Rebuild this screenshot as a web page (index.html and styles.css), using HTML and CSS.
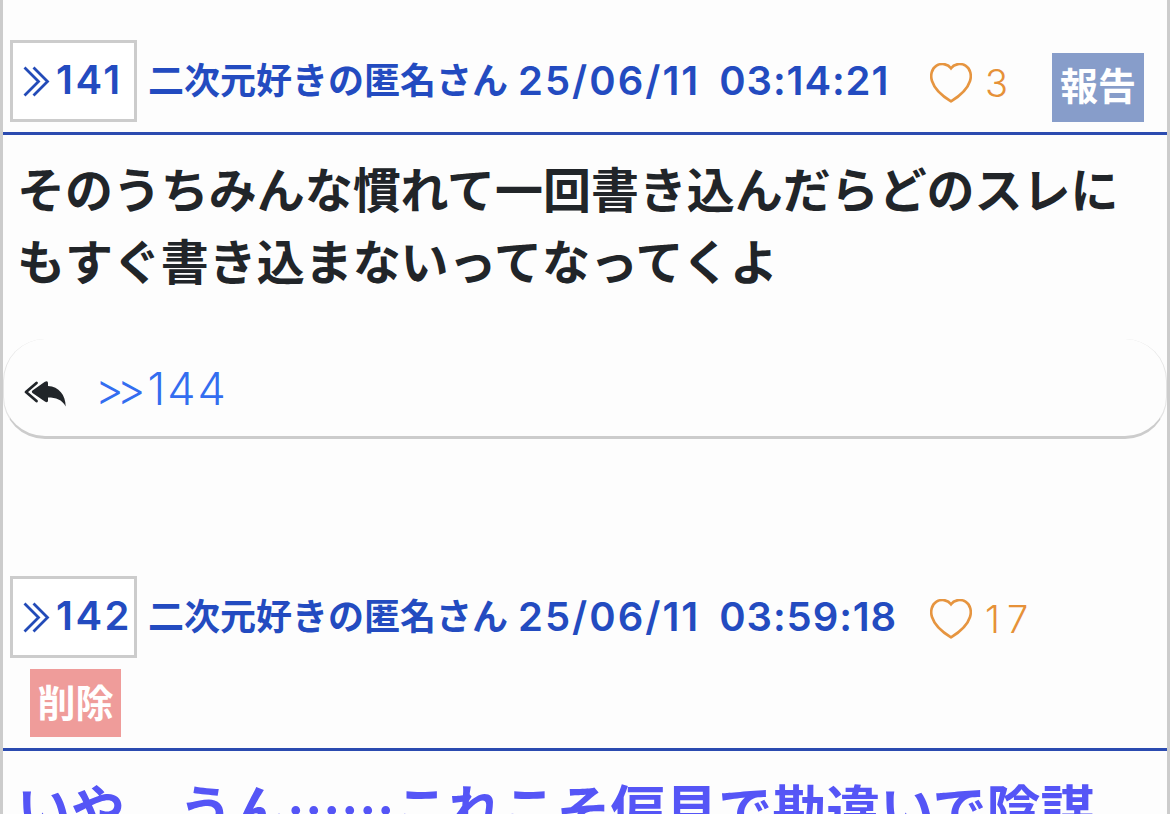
FILE: index.html
```html
<!DOCTYPE html>
<html lang="ja">
<head>
    <meta charset="UTF-8">
    <meta name="viewport" content="width=device-width, initial-scale=1.0">
    <title>スレッド</title>
    <link rel="stylesheet" href="styles.css">
</head>
<body>
    <main class="thread">
        <article class="post">
            <header class="post-header">
                <a class="res-number">
                    <svg class="icon-angles" viewBox="0 0 27 31" width="27" height="31"><path d="M1.5 1.5 15.5 15.5 1.5 29.5M10.5 1.5 24.5 15.5 10.5 29.5"/></svg>
                    <span class="num">141</span>
                </a>
                <span class="name">二次元好きの匿名さん</span>
                <time class="date">25/06/11 <span class="clock">03:14:21</span></time>
                <span class="like">
                    <svg class="icon-heart" viewBox="0 0 42 40" width="42" height="40"><path d="M21 5.2C17.5.2 10.5.2 6.500 2.600 1.500 5.600.200 12.500 2 18 4.500 26 13 33.500 21 38.300 29 33.500 37.500 26 40 18 41.800 12.500 40.500 5.600 35.500 2.600 31.500.2 24.500.2 21 5.200Z"/></svg>
                    <span class="like-count">3</span>
                </span>
                <button class="btn report">報告</button>
            </header>
            <p class="post-body">そのうちみんな慣れて一回書き込んだらどのスレに<br>もすぐ書き込まないってなってくよ</p>
            <div class="replies">
                <svg class="icon-reply" viewBox="0 0 42 26" width="42" height="26"><path class="reply-line" d="M12.500 2 2 11 12.500 20"/><path d="M8.500 9.500 20.500.900Q24 -.8 24 2V5C35 5.500 41.500 14 41.700 25.500 38 18.500 32 16.500 24 16.500V19.500Q24 22.300 20.500 20.300L8.500 12Q7.200 10.700 8.500 9.500Z"/></svg>
                <a class="reply-link"><span class="arrows">&gt;&gt;</span>144</a>
            </div>
        </article>

        <article class="post">
            <header class="post-header">
                <a class="res-number">
                    <svg class="icon-angles" viewBox="0 0 27 31" width="27" height="31"><path d="M1.5 1.5 15.5 15.5 1.5 29.5M10.5 1.5 24.5 15.5 10.5 29.5"/></svg>
                    <span class="num">142</span>
                </a>
                <span class="name">二次元好きの匿名さん</span>
                <time class="date">25/06/11 <span class="clock">03:59:18</span></time>
                <span class="like">
                    <svg class="icon-heart" viewBox="0 0 42 40" width="42" height="40"><path d="M21 5.2C17.5.2 10.5.2 6.500 2.600 1.500 5.600.200 12.500 2 18 4.500 26 13 33.500 21 38.300 29 33.500 37.500 26 40 18 41.800 12.500 40.500 5.600 35.500 2.600 31.500.2 24.500.2 21 5.200Z"/></svg>
                    <span class="like-count">17</span>
                </span>
                <button class="btn delete">削除</button>
            </header>
            <p class="post-body popular">いや　うん……これこそ偏見で勘違いで陰謀</p>
        </article>
    </main>
</body>
</html>
```

FILE: styles.css
```css
* {
    margin: 0;
    padding: 0;
    box-sizing: border-box;
}

body {
    height: 814px;
    overflow: hidden;
    background: #fdfdfd;
    color: #212529;
    font-family: "Noto Sans CJK JP", sans-serif;
}

.thread {
    height: 814px;
    padding-top: 40px;
    border-left: 3px solid #ccc;
    border-right: 3px solid #ccc;
    overflow: hidden;
}

.post {
    height: 536px;
}

.post-header {
    display: flex;
    flex-wrap: wrap;
    align-items: flex-start;
    padding: 0 7px 10px;
    border-bottom: 3px solid #2b4bb0;
    color: #234bc0;
}

.res-number {
    display: flex;
    align-items: center;
    width: 127px;
    height: 82px;
    padding-left: 10px;
    border: 3px solid #ccc;
    background: #fff;
}

.icon-angles {
    fill: none;
    stroke: #234bb8;
    stroke-width: 2.8;
}

.num,
.date {
    font-family: Inter, sans-serif;
    font-size: 40px;
    font-weight: 600;
    font-feature-settings: "calt" 0;
    line-height: 82px;
    white-space: nowrap;
}

.num {
    margin: -2px 0 0 6px;
    letter-spacing: 2.5px;
}

.name {
    margin-left: 11px;
    font-size: 36px;
    font-weight: 700;
    line-height: 77px;
}

.date {
    width: 412px;
    margin-left: 10px;
    letter-spacing: 2px;
}

.clock {
    margin-left: 7px;
    letter-spacing: 0.9px;
}

.like {
    display: flex;
    align-items: center;
    height: 82px;
    margin-right: 13px;
    padding-top: 4px;
    color: #e69138;
}

.icon-heart {
    fill: none;
    stroke: #e69540;
    stroke-width: 2.6;
}

.like-count {
    margin-left: 13px;
    font-family: Inter, sans-serif;
    font-size: 38px;
    font-weight: 350;
    letter-spacing: 7px;
    margin-right: -6px;
}

.btn {
    width: 92px;
    height: 69px;
    padding-bottom: 7px;
    border: none;
    color: #fff;
    font-family: inherit;
    font-size: 38px;
    font-weight: 700;
    line-height: 60px;
}

.report {
    margin: 13px 16px 0 auto;
    background: #879dca;
}

.delete {
    width: 91px;
    height: 68px;
    margin: 11px 16px 1px 20px;
    padding-bottom: 4px;
    background: #ef9c9a;
}

.post-body {
    padding: 16px 14px 0;
    font-size: 48px;
    font-weight: 700;
    line-height: 72px;
    letter-spacing: -0.05px;
    white-space: nowrap;
}

.popular {
    color: #5555f6;
    font-size: 54px;
    line-height: 81px;
}

.replies {
    display: flex;
    align-items: center;
    height: 100px;
    margin-top: 44px;
    padding: 10px 20px 0;
    border: 1px solid #e4e4e4;
    border-top: none;
    border-bottom: 3px solid #ccc;
    border-radius: 42px;
}

.icon-reply {
    margin: 2px 0 0;
    fill: #212529;
}

.reply-line {
    fill: none;
    stroke: #212529;
    stroke-width: 2.8;
    stroke-linecap: round;
    stroke-linejoin: round;
}

.reply-link {
    margin: -9px 0 0 29px;
    color: #336df0;
    font-family: Inter, sans-serif;
    font-size: 45px;
    font-weight: 350;
    font-feature-settings: "calt" 0;
    letter-spacing: 2px;
}

.arrows {
    margin-right: 9px;
    font-size: 44px;
    letter-spacing: -7px;
}
```
